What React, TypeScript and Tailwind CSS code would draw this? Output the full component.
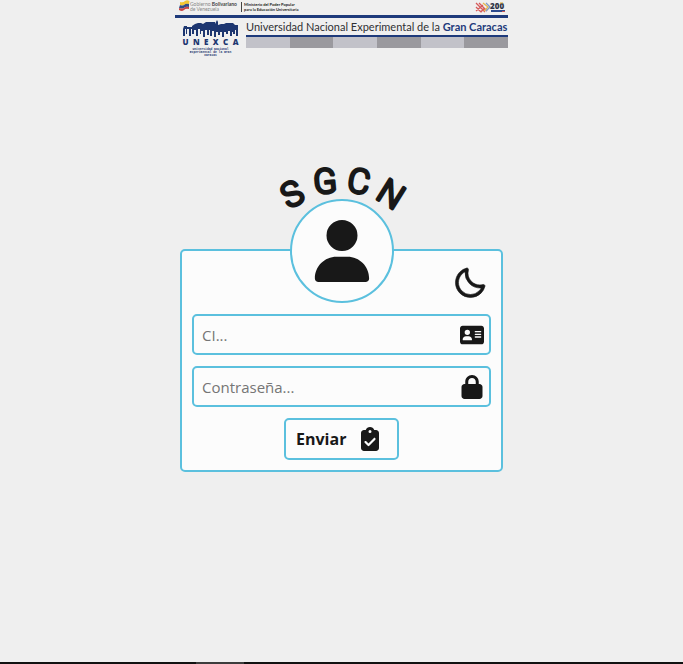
import { useState } from "react";
import { FaAddressCard, FaClipboardCheck, FaLock, FaUser } from "react-icons/fa6";
import { BiMoon } from "react-icons/bi";

const letters = [
  { char: "S", x: 18, y: 37, angle: -28 },
  { char: "G", x: 51, y: 24, angle: -5 },
  { char: "C", x: 85, y: 24, angle: 10 },
  { char: "N", x: 117, y: 37, angle: 32 },
];

const bands = [0, 1, 2, 3, 4, 5];

function Flag() {
  return (
    <svg viewBox="0 0 11 12" className="h-3 w-[11px]" aria-hidden="true">
      <path d="M1 2 Q4 3 6 1 Q8 -.5 10.5 1 L10 4 Q7 3 5 5 Q3 6 1 5Z" fill="#f2c632" />
      <path d="M1 5 Q3 6 5 5 Q7 3 10 4 L10 7 Q7 6 5 8 Q3 9 0 8Z" fill="#304a86" />
      <path d="M0 8 Q3 9 5 8 Q7 6 10 7 L10 9 Q7 8 5 10 Q3 12 0 10Z" fill="#c94343" />
    </svg>
  );
}

function Bicentennial() {
  return (
    <svg viewBox="0 0 30 12" className="h-3 w-[30px] overflow-visible" aria-hidden="true">
      <path d="M0 2 L9 11 M3 2 L11 10 M0 6 L5 11 M0 10 L7 4 M5 11 L8 7" stroke="#d65a5a" strokeWidth="1.3" fill="none" />
      <path d="M7 2 L12 6 L8 10" stroke="#e6b84c" strokeWidth="1.3" fill="none" />
      <path d="M10 2 L14 6 L10 10" stroke="#829bc9" strokeWidth="1.4" fill="none" />
      <text x="14" y="8" fontSize="8" fontWeight="800" fill="#303548" fontFamily="Open Sans, sans-serif">200</text>
      <path d="M24 2 H27" stroke="#d8ae3c" strokeWidth="1" />
      <path d="M15 10 H29" stroke="#2c4a8d" strokeWidth="2" />
      <path d="M26 10.5 H29" stroke="#c85757" strokeWidth="1" />
    </svg>
  );
}

function Skyline() {
  return (
    <svg viewBox="0 0 56 20" className="h-5 w-14" fill="#1d3670" aria-hidden="true">
      <path d="M0 9 L1 6 H4 V7 H9 V6 L12 4 L15 3 H18 L20 4 L23 2 H32 L33 4 V2 L34 0 L35 2 V5 L38 4 H41 L43 3 H50 L52 5 H55 V16 H53 V10 H52 V14 H50 V12 H49 V16 H47 V11 H45 V14 H43 V12 H41 V17 H39 V12 H37 V15 H35 V12 H33 V17 H31 V11 H29 V16 H27 V10 H26 V15 H24 V10 H22 V17 H20 V11 H18 V14 H17 V9 H15 V16 H13 V10 H11 V14 H9 V9 H8 V16 H6 V9 H4 V14 H3 V9 H2 V16 H0Z" />
    </svg>
  );
}

function Banner() {
  return (
    <header className="w-full max-w-[333px] font-['Lato',sans-serif]">
      <div className="flex h-[15px] items-start justify-between pr-[2px] pl-1">
        <div className="flex items-start">
          <Flag />
          <p className="w-[51px] pt-[2px] text-[5px] leading-[5px] whitespace-nowrap text-[#888]">
            Gobierno <b className="text-[#444]">Bolivariano</b>
            <br />
            de Venezuela
          </p>
          <p className="mt-[2px] border-l border-[#444] pl-[2px] text-[4px] leading-[5px] font-bold whitespace-nowrap text-[#222]">
            Ministerio del Poder Popular
            <br />
            para la Educación Universitaria
          </p>
        </div>
        <div className="pt-px">
          <Bicentennial />
        </div>
      </div>
      <div className="h-[3px] bg-[#1e3a7b]" />
      <div className="flex">
        <div className="flex w-[71px] shrink-0 flex-col items-center pt-[2px] text-[#1d3670]">
          <Skyline />
          <p className="-mt-[2px] flex h-[7px] w-14 justify-between font-['Open_Sans',sans-serif] text-[8px] leading-[7px] font-extrabold">
            <span>U</span>
            <span>N</span>
            <span>E</span>
            <span>X</span>
            <span>C</span>
            <span>A</span>
          </p>
          <p className="pt-[3px] text-center font-['Liberation_Mono',monospace] text-[3px] leading-[3px] font-bold">
            Universidad Nacional
            <br />
            Experimental de la Gran
            <br />
            Caracas
          </p>
        </div>
        <div className="min-w-0 grow">
          <h1 className="h-[17px] pt-px text-[11px] leading-[15px] font-normal whitespace-nowrap text-[#303034]">
            Universidad Nacional Experimental de la <b className="font-bold text-[#1e3a7b]">Gran Caracas</b>
          </h1>
          <div className="h-[2px] bg-[#1e3a7b]" />
          <div className="flex h-[11px]">
            {bands.map((band) => (
              <div key={band} className="grow odd:bg-[#c2c2c9] even:bg-[#9a999e]" />
            ))}
          </div>
        </div>
      </div>
    </header>
  );
}

export default function App() {
  const [id, setId] = useState("");
  const [password, setPassword] = useState("");

  return (
    <div className="flex min-h-screen flex-col items-center bg-[#efefef] font-['Open_Sans',sans-serif] text-[#181818]">
      <Banner />
      <main className="flex w-full grow flex-col items-center pt-[100px]">
        <svg viewBox="0 0 136 64" className="h-16 w-[136px] overflow-visible" role="img" aria-label="SGCN">
          {letters.map(({ char, x, y, angle }) => (
            <text
              key={char}
              transform={`translate(${x} ${y}) rotate(${angle})`}
              y="12"
              textAnchor="middle"
              fontSize="34"
              fontWeight="300"
              fontFamily="Roboto, sans-serif"
              fill="#181818"
              stroke="#181818"
              strokeWidth="3"
              strokeLinejoin="round"
            >
              {char}
            </text>
          ))}
        </svg>
        <form
          className="mt-7 flex w-full max-w-[323px] flex-col items-center rounded-[5px] border-2 border-[#5bc0de] bg-[#fcfcfc] px-[10px] pb-[10px]"
          onSubmit={(event) => event.preventDefault()}
        >
          <div className="-mt-[52px] flex size-[104px] items-center justify-center rounded-full border-2 border-[#5bc0de] bg-[#fcfcfc]">
            <FaUser className="size-[62px]" />
          </div>
          <button type="button" aria-label="Modo oscuro" className="-mt-[38px] mr-[3px] mb-[13px] self-end">
            <BiMoon className="size-9" stroke="currentColor" strokeWidth="0.4" />
          </button>
          <label className="flex h-[41px] w-full items-center rounded-[5px] border-2 border-[#5bc0de] pr-[5px] pl-2">
            <input
              className="min-w-0 grow bg-transparent pt-px text-[15px] leading-6 outline-none placeholder:text-[#757575]"
              aria-label="CI"
              placeholder="CI..."
              value={id}
              onChange={(event) => setId(event.target.value)}
            />
            <FaAddressCard className="size-6" />
          </label>
          <label className="mt-[11px] flex h-[41px] w-full items-center rounded-[5px] border-2 border-[#5bc0de] pr-[5px] pl-2">
            <input
              type="password"
              className="min-w-0 grow bg-transparent pt-px text-[15px] leading-6 outline-none placeholder:text-[#757575]"
              aria-label="Contraseña"
              placeholder="Contraseña..."
              value={password}
              onChange={(event) => setPassword(event.target.value)}
            />
            <FaLock className="size-6" />
          </label>
          <button
            type="submit"
            className="mt-[11px] flex h-[42px] w-[115px] items-center justify-between rounded-[5px] border-2 border-[#5bc0de] pr-[15px] pl-[10px] text-[16px] font-bold"
          >
            Enviar
            <FaClipboardCheck className="size-6" />
          </button>
        </form>
      </main>
      <footer className="flex h-[2px] w-full bg-[#111]">
        <div className="ml-[196px] w-12 bg-[#3c3c3c]" />
      </footer>
    </div>
  );
}
